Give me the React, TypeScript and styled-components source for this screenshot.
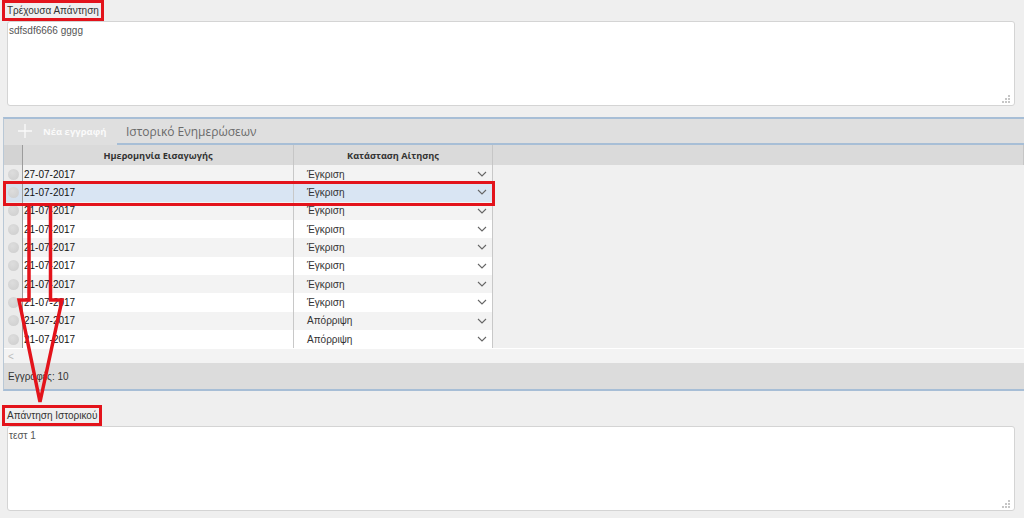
import React from "react";
import styled, { createGlobalStyle } from "styled-components";

const RED = "#e3131b";
const BLUE_LINE = "#a7bed6";

type Entry = { date: string; status: string };

const entries: Entry[] = [
  { date: "27-07-2017", status: "Έγκριση" },
  { date: "21-07-2017", status: "Έγκριση" },
  { date: "21-07-2017", status: "Έγκριση" },
  { date: "21-07-2017", status: "Έγκριση" },
  { date: "21-07-2017", status: "Έγκριση" },
  { date: "21-07-2017", status: "Έγκριση" },
  { date: "21-07-2017", status: "Έγκριση" },
  { date: "21-07-2017", status: "Έγκριση" },
  { date: "21-07-2017", status: "Απόρριψη" },
  { date: "21-07-2017", status: "Απόρριψη" },
];

const SELECTED = 1;

const GlobalStyle = createGlobalStyle`
  html, body {
    margin: 0;
    background: #efefef;
  }
  body {
    font-family: "Liberation Sans", Arial, sans-serif;
    color: #333;
  }
`;

const Page = styled.div`
  position: relative;
  width: 1024px;
  height: 518px;
  overflow: hidden;
  display: flex;
  flex-direction: column;
`;

const Label = styled.div<{ $gap?: number }>`
  align-self: flex-start;
  margin: ${(p) => p.$gap ?? 0}px 0 0 2px;
  border: 3px solid ${RED};
  padding: 0 2px;
  font-size: 10px;
  line-height: 15px;
  color: #333;
`;

const TextBox = styled.div`
  box-sizing: border-box;
  height: 85px;
  margin: 0 9px 0 7px;
  padding: 2px 1px;
  display: flex;
  flex-direction: column;
  background: #fff;
  border: 1px solid #d4d4d4;
  border-radius: 3px;
  font-size: 10px;
  line-height: 14px;
  color: #555;
`;

const Grip = styled.svg`
  margin-top: auto;
  align-self: flex-end;
  margin-right: 2px;
`;

const Grid = styled.div`
  margin: 11px 0 0 3px;
  border-top: 2px solid ${BLUE_LINE};
  border-left: 1px solid #b9c8d6;
  border-bottom: 2px solid ${BLUE_LINE};
  background: #f0f0f0;
  display: flex;
  flex-direction: column;
`;

const Toolbar = styled.div`
  display: flex;
  height: 26px;
  background: #dfdfdf;
`;

const AddButton = styled.div`
  box-sizing: border-box;
  width: 113px;
  display: flex;
  align-items: center;
  gap: 11px;
  padding: 0 0 2px 14px;
  font-family: "Open Sans", sans-serif;
  font-weight: 700;
  font-size: 9.5px;
  color: #fafafa;
`;

const TabStrip = styled.div`
  flex: 1;
  display: flex;
  box-sizing: border-box;
  border-bottom: 2px solid ${BLUE_LINE};
`;

const Tab = styled.div`
  display: flex;
  align-items: center;
  padding: 0 0 0 9px;
  font-family: "Open Sans", sans-serif;
  font-size: 12px;
  color: #6a6a6a;
`;

const HeaderRow = styled.div`
  display: flex;
  height: 20px;
  background: #dadada;
  font-family: "Open Sans", sans-serif;
  font-weight: 700;
  font-size: 9.2px;
  color: #333;
`;

const HeadCell = styled.div<{ $width?: number; $dark?: boolean }>`
  box-sizing: border-box;
  width: ${(p) => (p.$width ? `${p.$width}px` : "auto")};
  flex: ${(p) => (p.$width ? "none" : 1)};
  display: flex;
  align-items: center;
  justify-content: center;
  border-right: 1px solid ${(p) => (p.$dark ? "#9c9c9c" : "#c6c6c6")};
  background: ${(p) => (p.$dark ? "#d3d3d3" : "transparent")};
`;

const Body = styled.div`
  display: flex;
  flex-direction: column;
`;

const Row = styled.div<{ $index: number; $selected?: boolean }>`
  position: ${(p) => (p.$selected ? "relative" : "static")};
  display: flex;
  width: 489px;
  height: 18.33px;
  background: ${(p) =>
    p.$selected ? "#d9e5f3" : p.$index % 2 === 0 ? "#f3f3f3" : "#ffffff"};
  font-size: 10px;

  &::after {
    content: ${(p) => (p.$selected ? '""' : "none")};
    position: absolute;
    z-index: 1;
    inset: -2px -2px -4px -1px;
    border: 3px solid ${RED};
  }
`;

const SelectCell = styled.div<{ $selected?: boolean }>`
  box-sizing: border-box;
  width: 19px;
  display: flex;
  align-items: center;
  justify-content: center;
  background: ${(p) => (p.$selected ? "#d6e1ee" : "#ebebeb")};
  border-right: 1px solid #9c9c9c;
`;

const Radio = styled.span`
  width: 11px;
  height: 11px;
  border-radius: 50%;
  background: radial-gradient(circle at 40% 35%, #dddddd, #cdcdcd);
`;

const DateCell = styled.div`
  box-sizing: border-box;
  width: 271px;
  display: flex;
  align-items: center;
  padding-left: 1px;
  color: #111;
  border-right: 1px solid #c8c8c8;
`;

const StatusCell = styled.div`
  box-sizing: border-box;
  width: 199px;
  display: flex;
  align-items: center;
  justify-content: space-between;
  padding: 0 5px 0 13px;
  color: #333;
  border-right: 1px solid #c8c8c8;
`;

const ScrollStrip = styled.div`
  height: 14px;
  border-top: 1px solid #fff;
  display: flex;
  align-items: center;
  padding-left: 4px;
  font-size: 10px;
  color: #bbb;
  background: #f3f3f3;
`;

const Footer = styled.div`
  height: 26px;
  display: flex;
  align-items: center;
  padding-left: 4px;
  font-size: 10px;
  color: #333;
  background: #dcdcdc;
`;

const Annotation = styled.svg`
  position: absolute;
  left: 0;
  top: 0;
  pointer-events: none;
`;

const ResizeGrip = () => (
  <Grip width="9" height="8" viewBox="0 0 9 8">
    {[
      [7, 1],
      [7, 4],
      [4, 4],
      [7, 7],
      [4, 7],
      [1, 7],
    ].map(([x, y]) => (
      <rect key={`${x}-${y}`} x={x - 0.75} y={y - 0.75} width="1.5" height="1.5" fill="#9a9a9a" />
    ))}
  </Grip>
);

const Chevron = () => (
  <svg width="10" height="6" viewBox="0 0 10 6">
    <polyline points="1,1 5,5 9,1" fill="none" stroke="#666" strokeWidth="1.1" />
  </svg>
);

const PlusIcon = () => (
  <svg width="14" height="14" viewBox="0 0 14 14">
    <path d="M7 0V14M0 7H14" stroke="#fafafa" strokeWidth="1.3" />
  </svg>
);

export default function App() {
  return (
    <Page>
      <GlobalStyle />

      <Label>Τρέχουσα Απάντηση</Label>
      <TextBox>
        <span>sdfsdf6666 gggg</span>
        <ResizeGrip />
      </TextBox>

      <Grid>
        <Toolbar>
          <AddButton>
            <PlusIcon />
            Νέα εγγραφή
          </AddButton>
          <TabStrip>
            <Tab>Ιστορικό Ενημερώσεων</Tab>
          </TabStrip>
        </Toolbar>

        <HeaderRow>
          <HeadCell $width={19} $dark />
          <HeadCell $width={271}>Ημερομηνία Εισαγωγής</HeadCell>
          <HeadCell $width={199}>Κατάσταση Αίτησης</HeadCell>
          <HeadCell />
        </HeaderRow>

        <Body>
          {entries.map((entry, i) => (
            <Row key={i} $index={i} $selected={i === SELECTED}>
              <SelectCell $selected={i === SELECTED}>
                <Radio />
              </SelectCell>
              <DateCell>{entry.date}</DateCell>
              <StatusCell>
                {entry.status}
                <Chevron />
              </StatusCell>
            </Row>
          ))}
        </Body>

        <ScrollStrip>&lt;</ScrollStrip>
        <Footer>Εγγραφές: 10</Footer>
      </Grid>

      <Label $gap={14}>Απάντηση Ιστορικού</Label>
      <TextBox>
        <span>τεστ 1</span>
        <ResizeGrip />
      </TextBox>

      {/* annotation arrow from the selected row down to the history answer */}
      <Annotation width="1024" height="518" viewBox="0 0 1024 518">
        <path
          d="M29 204 V300 H19 L40 402 L62 300 H50.5 V204"
          fill="none"
          stroke={RED}
          strokeWidth="3.5"
          strokeLinejoin="miter"
        />
      </Annotation>
    </Page>
  );
}
